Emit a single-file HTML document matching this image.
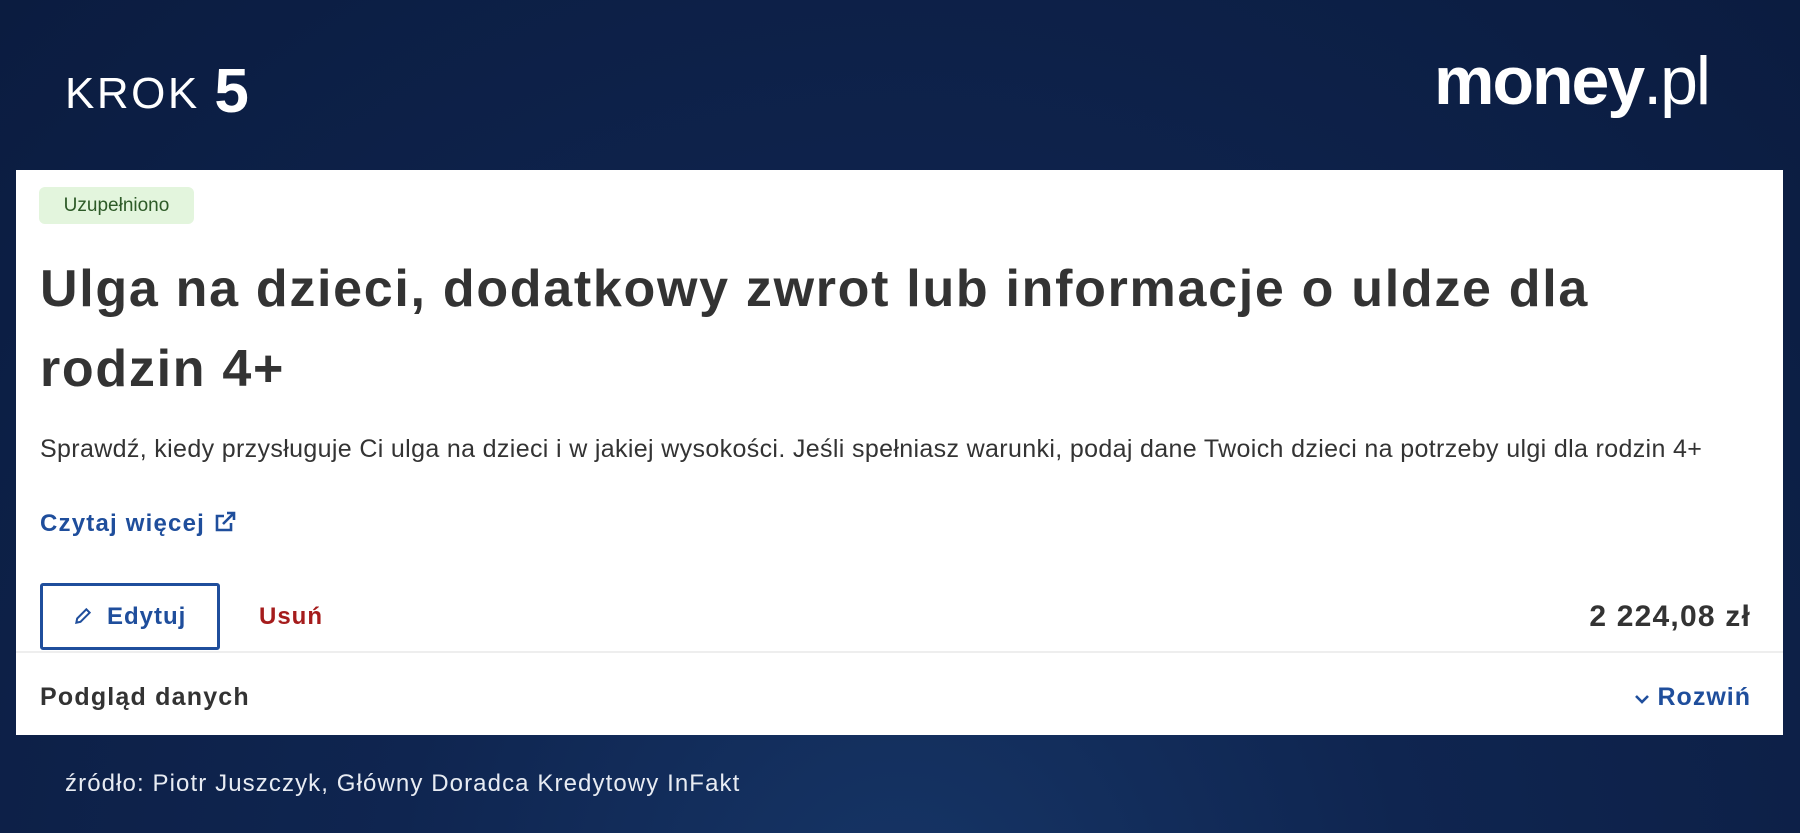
<!DOCTYPE html>
<html><head><meta charset="utf-8"><style>
*{margin:0;padding:0;box-sizing:border-box}
body{width:1800px;height:833px;overflow:hidden;background:radial-gradient(ellipse at 50% 110%,#163566 0%,#0f2550 40%,#0b1c40 100%);font-family:"Liberation Sans",sans-serif;position:relative}
.abs{position:absolute;white-space:nowrap}
.krok{left:65px;top:52px;color:#fff;font-size:44px;letter-spacing:2.5px}
.krok b{font-size:62px;font-weight:bold;position:relative;top:4px}
.money{left:1434px;top:42px;color:#fff;font-size:68px;font-weight:bold;letter-spacing:-2px}
.money span{font-weight:normal}
.card{left:16px;top:170px;width:1767px;height:565px;background:#fff}
.badge{left:23px;top:17px;width:155px;height:37px;background:#e3f5dd;border-radius:6px;color:#2d5a27;font-size:19px;line-height:37px;text-align:center}
.title{left:24px;top:79px;color:#333;font-size:52px;font-weight:bold;line-height:80px;letter-spacing:1.7px}
.desc{left:24px;top:265px;color:#333;font-size:25px;letter-spacing:0.35px}
.more{left:24px;top:340px;color:#1f4e9c;font-size:24px;font-weight:bold;letter-spacing:1.2px}
.btn{left:24px;top:413px;width:180px;height:67px;border:3px solid #1f4e9c;border-radius:3px;color:#1f4e9c;font-size:24px;font-weight:bold;line-height:61px;padding-left:30px;letter-spacing:1px}
.usun{left:243px;top:433px;color:#a51c1c;font-size:24px;font-weight:bold;letter-spacing:1px}
.amt{right:32px;top:430px;color:#333;font-size:30px;font-weight:bold;letter-spacing:1.2px}
.hr{left:0;top:481px;width:1767px;height:2px;background:#eee}
.pod{left:24px;top:513px;color:#333;font-size:25px;font-weight:bold;letter-spacing:1.2px}
.roz{right:32px;top:513px;color:#1f4e9c;font-size:25px;font-weight:bold;letter-spacing:1px}
.src{left:65px;top:770px;color:#e8ecf3;font-size:24px;letter-spacing:1.1px}
</style></head><body>
<div class="abs krok">KROK <b>5</b></div>
<div class="abs money">money<span>.pl</span></div>
<div class="abs card">
<div class="abs badge">Uzupełniono</div>
<div class="abs title">Ulga na dzieci, dodatkowy zwrot lub informacje o uldze dla<br>rodzin 4+</div>
<div class="abs desc">Sprawdź, kiedy przysługuje Ci ulga na dzieci i w jakiej wysokości. Jeśli spełniasz warunki, podaj dane Twoich dzieci na potrzeby ulgi dla rodzin 4+</div>
<div class="abs more">Czytaj więcej <svg width="24" height="24" viewBox="0 0 24 24" fill="none" stroke="#1f4e9c" stroke-width="2.6" style="vertical-align:-3px"><path d="M18 13v7H4V6h7M14 3h7v7M21 3 10 14"/></svg></div>
<div class="abs btn"><svg width="20" height="20" viewBox="0 0 24 24" fill="none" stroke="#1f4e9c" stroke-width="2.4" style="vertical-align:-2px;margin-right:14px"><path d="M4 20l1-5L16 4l4 4L9 19z"/></svg>Edytuj</div>
<div class="abs usun">Usuń</div>
<div class="abs amt">2 224,08 zł</div>
<div class="abs hr"></div>
<div class="abs pod">Podgląd danych</div>
<div class="abs roz"><svg width="16" height="12" viewBox="0 0 16 12" fill="none" stroke="#1f4e9c" stroke-width="2.6" style="margin-right:8px"><path d="M2 3l6 6 6-6"/></svg>Rozwiń</div>
</div>
<div class="abs src">źródło: Piotr Juszczyk, Główny Doradca Kredytowy InFakt</div>
</body></html>
